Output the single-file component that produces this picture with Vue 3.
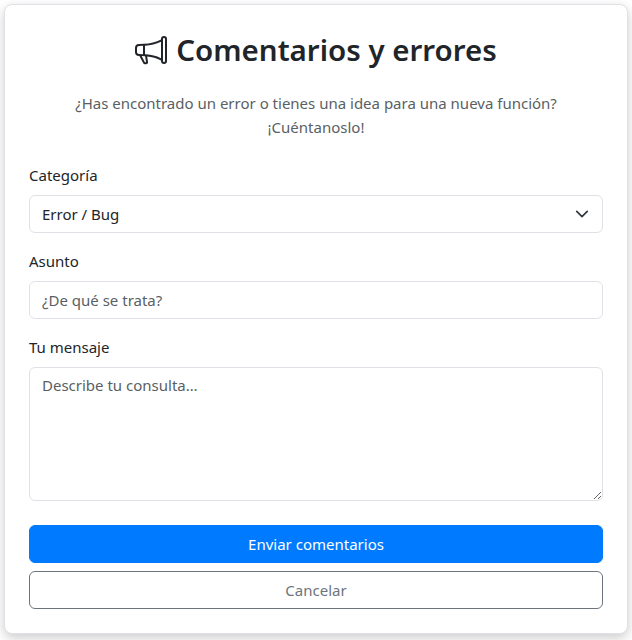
<script setup>
import { ref } from 'vue';

const category = ref('Error / Bug');
const subject = ref('');
const message = ref('');
</script>

<template>
    <div class="page">
        <div class="card">
            <h2 class="title">
                <svg class="megaphone" viewBox="0 0 16 16" fill="currentColor">
                    <path d="M13 2.5a1.5 1.5 0 0 1 3 0v11a1.5 1.5 0 0 1-3 0v-.214c-2.162-1.241-4.49-1.843-6.912-2.083l.405 2.712A1 1 0 0 1 5.51 15.1h-.548a1 1 0 0 1-.916-.599l-1.85-3.49-.202-.003A2.014 2.014 0 0 1 0 9V7a2.02 2.02 0 0 1 1.992-2.013 75 75 0 0 0 2.483-.075c3.043-.154 6.148-.849 8.525-2.199zm1 0v11a.5.5 0 0 0 1 0v-11a.5.5 0 0 0-1 0m-1 1.35c-2.344 1.205-5.209 1.842-8 2.033v4.233q.27.015.537.036c2.568.189 5.093.744 7.463 1.993zm-9 6.215v-4.13a95 95 0 0 1-1.992.052A1.02 1.02 0 0 0 1 7v2c0 .55.448 1.002 1.006 1.009A61 61 0 0 1 4 10.065m-.657.975 1.609 3.037.01.024h.548l-.002-.014-.443-2.966a68 68 0 0 0-1.722-.082z" />
                </svg>
                <span>Comentarios y errores</span>
            </h2>
            <p class="lead">¿Has encontrado un error o tienes una idea para una nueva función? ¡Cuéntanoslo!</p>

            <form @submit.prevent>
                <div class="field">
                    <label for="category">Categoría</label>
                    <div class="select-wrap">
                        <select id="category" v-model="category" class="control">
                            <option>Error / Bug</option>
                            <option>Sugerencia</option>
                            <option>Otro</option>
                        </select>
                        <svg class="chevron" viewBox="0 0 16 16" fill="none">
                            <path d="m2 5 6 6 6-6" stroke="#343a40" stroke-width="2" stroke-linecap="round" stroke-linejoin="round" />
                        </svg>
                    </div>
                </div>
                <div class="field">
                    <label for="subject">Asunto</label>
                    <input id="subject" v-model="subject" class="control" type="text" placeholder="¿De qué se trata?" />
                </div>
                <div class="field">
                    <label for="message">Tu mensaje</label>
                    <textarea id="message" v-model="message" class="control area" placeholder="Describe tu consulta…"></textarea>
                </div>
                <div class="actions">
                    <button class="btn btn-primary" type="submit">Enviar comentarios</button>
                    <button class="btn btn-outline" type="button">Cancelar</button>
                </div>
            </form>
        </div>
    </div>
</template>

<style>
body {
    background-color: #fff;
}
</style>

<style scoped>
.page {
    box-sizing: border-box;
    min-height: 640px;
    padding: 4px 4px 0 4px;
    font-family: "Noto Sans", "Open Sans", sans-serif;
    color: #212529;
}

.card {
    box-sizing: border-box;
    background-color: #fff;
    border: 1px solid #dee2e6;
    border-radius: 8px;
    padding: 24px;
    box-shadow: 0 4px 12px rgba(0, 0, 0, 0.2);
}

.title {
    display: flex;
    justify-content: center;
    align-items: center;
    gap: 9px;
    margin: 2px 0 22px 0;
    font-size: 29.5px;
    font-weight: 600;
    line-height: 38px;
}

.megaphone {
    width: 32px;
    height: 32px;
}

.lead {
    margin: 0 0 24px 0;
    font-size: 15px;
    line-height: 24px;
    text-align: center;
    color: #595f64;
}

.field {
    margin-bottom: 16px;
}

label {
    display: block;
    margin-bottom: 8px;
    font-size: 15px;
    line-height: 24px;
}

.select-wrap {
    position: relative;
}

.chevron {
    position: absolute;
    top: 12px;
    right: 14px;
    width: 14px;
    height: 14px;
    pointer-events: none;
}

.control {
    display: block;
    box-sizing: border-box;
    width: 100%;
    height: 38px;
    padding: 6px 12px;
    font-family: inherit;
    font-size: 15px;
    line-height: 24px;
    color: #212529;
    background-color: #fff;
    border: 1px solid #dee2e6;
    border-radius: 6px;
    outline: none;
    appearance: none;
}

.control::placeholder {
    color: #595f64;
    opacity: 1;
}

.area {
    height: 134px;
    padding-top: 5px;
    resize: vertical;
    appearance: auto;
}

.actions {
    display: flex;
    flex-direction: column;
    gap: 8px;
    margin-top: 24px;
}

.btn {
    height: 38px;
    font-family: inherit;
    font-size: 15px;
    border-radius: 6px;
    cursor: pointer;
}

.btn-primary {
    color: #fff;
    background-color: #007bff;
    border: 1px solid #007bff;
}

.btn-outline {
    color: #6c757d;
    background-color: #fff;
    border: 1px solid #6c757d;
}
</style>
